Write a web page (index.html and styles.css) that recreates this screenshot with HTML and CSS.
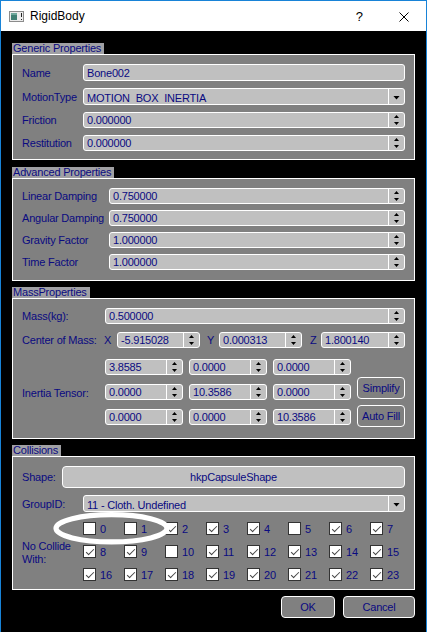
FILE: index.html
```html
<!DOCTYPE html>
<html lang="en">
<head>
    <meta charset="UTF-8">
    <meta name="viewport" content="width=device-width, initial-scale=1.0">
    <title>RigidBody</title>
    <link rel="stylesheet" href="styles.css">
</head>
<body>

    <div class="window">
        <!-- Title bar -->
        <div class="titlebar">
            <svg class="app-icon" viewBox="0 0 15 11">
                <rect x="0.5" y="0.5" width="14" height="10" fill="#ececec" stroke="#8c8c8c"/>
                <rect x="2" y="2" width="6" height="7" fill="#3f7f73"/>
                <rect x="2" y="2" width="6" height="2" fill="#6fa89c"/>
                <rect x="12" y="2" width="1" height="4" fill="#222"/>
                <rect x="12" y="8" width="1" height="1" fill="#222"/>
            </svg>
            <span class="title">RigidBody</span>
            <span class="help">?</span>
            <svg class="close" viewBox="0 0 10 10">
                <path d="M0.5 0.5 L9.5 9.5 M9.5 0.5 L0.5 9.5" stroke="#000" stroke-width="1"/>
            </svg>
        </div>

        <div class="content">
            <!-- Generic Properties -->
            <div class="group generic">
                <div class="group-title">Generic Properties</div>
                <div class="group-box">
                    <div class="form-row">
                        <span class="lbl">Name</span>
                        <div class="field">Bone002</div>
                    </div>
                    <div class="form-row">
                        <span class="lbl">MotionType</span>
                        <div class="field combo"><span class="val">MOTION_BOX_INERTIA</span><span class="drop"><i></i></span></div>
                    </div>
                    <div class="form-row">
                        <span class="lbl">Friction</span>
                        <div class="field spin"><span class="val">0.000000</span><span class="spin-btns"><i class="up"></i><i class="down"></i></span></div>
                    </div>
                    <div class="form-row">
                        <span class="lbl">Restitution</span>
                        <div class="field spin"><span class="val">0.000000</span><span class="spin-btns"><i class="up"></i><i class="down"></i></span></div>
                    </div>
                </div>
            </div>

            <!-- Advanced Properties -->
            <div class="group advanced">
                <div class="group-title">Advanced Properties</div>
                <div class="group-box">
                    <div class="form-row">
                        <span class="lbl">Linear Damping</span>
                        <div class="field spin"><span class="val">0.750000</span><span class="spin-btns"><i class="up"></i><i class="down"></i></span></div>
                    </div>
                    <div class="form-row">
                        <span class="lbl">Angular Damping</span>
                        <div class="field spin"><span class="val">0.750000</span><span class="spin-btns"><i class="up"></i><i class="down"></i></span></div>
                    </div>
                    <div class="form-row">
                        <span class="lbl">Gravity Factor</span>
                        <div class="field spin"><span class="val">1.000000</span><span class="spin-btns"><i class="up"></i><i class="down"></i></span></div>
                    </div>
                    <div class="form-row">
                        <span class="lbl">Time Factor</span>
                        <div class="field spin"><span class="val">1.000000</span><span class="spin-btns"><i class="up"></i><i class="down"></i></span></div>
                    </div>
                </div>
            </div>

            <!-- Mass Properties -->
            <div class="group mass">
                <div class="group-title">MassProperties</div>
                <div class="group-box">
                    <div class="form-row">
                        <span class="lbl">Mass(kg):</span>
                        <div class="field spin"><span class="val">0.500000</span><span class="spin-btns"><i class="up"></i><i class="down"></i></span></div>
                    </div>
                    <div class="form-row com">
                        <span class="lbl">Center of Mass:</span>
                        <span class="axis">X</span>
                        <div class="field spin"><span class="val">-5.915028</span><span class="spin-btns"><i class="up"></i><i class="down"></i></span></div>
                        <span class="axis y">Y</span>
                        <div class="field spin"><span class="val">0.000313</span><span class="spin-btns"><i class="up"></i><i class="down"></i></span></div>
                        <span class="axis z">Z</span>
                        <div class="field spin"><span class="val">1.800140</span><span class="spin-btns"><i class="up"></i><i class="down"></i></span></div>
                    </div>
                    <div class="inertia">
                        <span class="lbl">Inertia Tensor:</span>
                        <div class="tensor">
                            <div class="field spin"><span class="val">3.8585</span><span class="spin-btns"><i class="up"></i><i class="down"></i></span></div>
                            <div class="field spin"><span class="val">0.0000</span><span class="spin-btns"><i class="up"></i><i class="down"></i></span></div>
                            <div class="field spin"><span class="val">0.0000</span><span class="spin-btns"><i class="up"></i><i class="down"></i></span></div>
                            <div class="field spin"><span class="val">0.0000</span><span class="spin-btns"><i class="up"></i><i class="down"></i></span></div>
                            <div class="field spin"><span class="val">10.3586</span><span class="spin-btns"><i class="up"></i><i class="down"></i></span></div>
                            <div class="field spin"><span class="val">0.0000</span><span class="spin-btns"><i class="up"></i><i class="down"></i></span></div>
                            <div class="field spin"><span class="val">0.0000</span><span class="spin-btns"><i class="up"></i><i class="down"></i></span></div>
                            <div class="field spin"><span class="val">0.0000</span><span class="spin-btns"><i class="up"></i><i class="down"></i></span></div>
                            <div class="field spin"><span class="val">10.3586</span><span class="spin-btns"><i class="up"></i><i class="down"></i></span></div>
                        </div>
                        <div class="tensor-btns">
                            <div class="btn">Simplify</div>
                            <div class="btn">Auto Fill</div>
                        </div>
                    </div>
                </div>
            </div>

            <!-- Collisions -->
            <div class="group collisions">
                <div class="group-title">Collisions</div>
                <div class="group-box">
                    <div class="form-row shape-row">
                        <span class="lbl">Shape:</span>
                        <div class="shape-btn">hkpCapsuleShape</div>
                    </div>
                    <div class="form-row">
                        <span class="lbl">GroupID:</span>
                        <div class="field combo"><span class="val">11 - Cloth, Undefined</span><span class="drop"><i></i></span></div>
                    </div>
                    <div class="collide">
                        <span class="lbl">No Collide<br>With:</span>
                        <div class="checks">
                            <div class="check"><span class="box"></span><span>0</span></div>
                            <div class="check"><span class="box"></span><span>1</span></div>
                            <div class="check"><span class="box on"></span><span>2</span></div>
                            <div class="check"><span class="box on"></span><span>3</span></div>
                            <div class="check"><span class="box on"></span><span>4</span></div>
                            <div class="check"><span class="box"></span><span>5</span></div>
                            <div class="check"><span class="box on"></span><span>6</span></div>
                            <div class="check"><span class="box on"></span><span>7</span></div>
                            <div class="check"><span class="box on"></span><span>8</span></div>
                            <div class="check"><span class="box on"></span><span>9</span></div>
                            <div class="check"><span class="box"></span><span>10</span></div>
                            <div class="check"><span class="box on"></span><span>11</span></div>
                            <div class="check"><span class="box on"></span><span>12</span></div>
                            <div class="check"><span class="box on"></span><span>13</span></div>
                            <div class="check"><span class="box on"></span><span>14</span></div>
                            <div class="check"><span class="box on"></span><span>15</span></div>
                            <div class="check"><span class="box on"></span><span>16</span></div>
                            <div class="check"><span class="box on"></span><span>17</span></div>
                            <div class="check"><span class="box on"></span><span>18</span></div>
                            <div class="check"><span class="box on"></span><span>19</span></div>
                            <div class="check"><span class="box on"></span><span>20</span></div>
                            <div class="check"><span class="box on"></span><span>21</span></div>
                            <div class="check"><span class="box on"></span><span>22</span></div>
                            <div class="check"><span class="box on"></span><span>23</span></div>
                        </div>
                    </div>
                </div>
            </div>

            <!-- Dialog buttons -->
            <div class="dialog-btns">
                <div class="btn ok">OK</div>
                <div class="btn cancel">Cancel</div>
            </div>
        </div>

        <!-- hand-drawn highlight over boxes 0 and 1 -->
        <svg class="highlight" width="122" height="38" viewBox="0 0 122 38">
            <ellipse cx="59.5" cy="17.3" rx="55.5" ry="13.6" fill="none" stroke="#fff" stroke-width="5.2"/>
        </svg>
    </div>

</body>
</html>
```

FILE: styles.css
```css
* {
    margin: 0;
    padding: 0;
    box-sizing: border-box;
}

body {
    background: #000;
    font-family: "Liberation Sans", Arial, sans-serif;
    font-size: 11px;
    letter-spacing: -0.2px;
    color: #0a0a80;
}

.window {
    position: relative;
    width: 427px;
    height: 632px;
    border: 1px solid #1883d7;
    border-bottom: none;
    background: #000;
}

/* Title bar */
.titlebar {
    height: 30px;
    background: #fff;
    color: #000;
    display: flex;
    align-items: center;
    padding-left: 8px;
    letter-spacing: 0;
}

.app-icon {
    width: 15px;
    height: 11px;
    margin-top: 1px;
}

.title {
    margin-left: 6px;
    font-size: 12px;
}

.help {
    margin-left: auto;
    font-size: 13px;
}

.close {
    width: 10px;
    height: 10px;
    margin-left: 36px;
    margin-right: 17px;
    margin-top: 1px;
}

/* Content */
.content {
    padding: 12px 11px 0;
}

.group {
    display: flex;
    flex-direction: column;
    align-items: flex-start;
    margin-bottom: 6px;
}

.group.generic {
    margin-bottom: 7px;
}

.group-title {
    height: 11px;
    line-height: 11px;
    padding: 0 3px 0 1px;
    background: #a0a0a4;
}

.group-box {
    align-self: stretch;
    background: #808080;
    border: 1px solid #fff;
    padding: 9px 9px 8px;
    display: flex;
    flex-direction: column;
    gap: 7px;
}

.form-row {
    display: flex;
    align-items: center;
}

.lbl {
    flex: none;
    width: 61px;
    white-space: nowrap;
}

/* Fields */
.field {
    flex: 1;
    height: 17px;
    background: #c0c0c0;
    border: 1px solid #fff;
    border-radius: 3px;
    display: flex;
    align-items: center;
    padding-left: 3px;
    white-space: nowrap;
    overflow: hidden;
}

.field.spin {
    height: 16px;
}

.val {
    flex: 1;
}

.spin-btns,
.drop {
    flex: none;
    width: 16px;
    align-self: stretch;
    border-left: 1px solid #fff;
    display: flex;
    align-items: center;
}

.spin-btns {
    flex-direction: column;
    justify-content: space-between;
    padding: 2px 0 2px;
}

.spin-btns i {
    display: block;
    width: 5px;
    height: 3px;
    background: #000;
}

.spin-btns .up {
    clip-path: polygon(50% 0, 100% 100%, 0 100%);
}

.spin-btns .down {
    clip-path: polygon(0 0, 100% 0, 50% 100%);
}

/* text sits low in the combo and its underscores are cut off */
.combo .val {
    align-self: flex-start;
    height: 13px;
    padding-top: 2px;
    line-height: 14px;
    overflow: hidden;
}

.drop {
    justify-content: center;
}

.drop i {
    display: block;
    width: 7px;
    height: 4px;
    margin-top: 2px;
    background: #000;
    clip-path: polygon(0 0, 100% 0, 50% 100%);
}

/* Advanced */
.advanced .group-box {
    gap: 6px;
    padding-bottom: 10px;
}

.advanced .lbl {
    width: 87px;
}

/* Mass */
.mass .group-box {
    gap: 0;
    padding-bottom: 11px;
}

.mass .lbl {
    width: 83px;
}

.com {
    margin-top: 8px;
}

.com .lbl {
    width: 82px;
}

.axis {
    flex: none;
    width: 13px;
}

.axis.y {
    width: 19px;
    padding-left: 7px;
}

.axis.z {
    width: 19px;
    padding-left: 8px;
}

.com .field {
    flex: none;
    width: 83px;
}

.com .field:last-child {
    flex: 1;
}

.inertia {
    display: flex;
    align-items: center;
    margin-top: 11px;
}

.tensor {
    align-self: flex-start;
    display: grid;
    grid-template-columns: repeat(3, 78px);
    column-gap: 6px;
    row-gap: 9px;
    padding-bottom: 2px;
}

.tensor-btns {
    align-self: stretch;
    width: 48px;
    margin-left: 6px;
    display: flex;
    flex-direction: column;
    justify-content: flex-end;
    gap: 6px;
}

.btn {
    height: 22px;
    background: #808080;
    border: 1px solid #fff;
    border-radius: 4px;
    display: flex;
    align-items: center;
    justify-content: center;
}

/* Collisions */
.shape-row .lbl {
    width: 40px;
}

.shape-btn {
    flex: 1;
    height: 22px;
    background: #c0c0c0;
    border: 1px solid #fff;
    border-radius: 4px;
    display: flex;
    align-items: center;
    justify-content: center;
}

.collide {
    display: flex;
    align-items: center;
    margin-top: 3px;
}

.collide .lbl {
    line-height: 13px;
    padding-top: 2px;
}

.checks {
    display: grid;
    grid-template-columns: repeat(8, 41px);
    row-gap: 10px;
}

.check {
    display: flex;
    align-items: center;
    height: 13px;
}

.box {
    width: 13px;
    height: 13px;
    background: #fff;
    border: 1px solid #333;
    display: flex;
    align-items: center;
    justify-content: center;
}

.box.on::after {
    content: "";
    width: 7px;
    height: 3px;
    border-left: 1.5px solid #444;
    border-bottom: 1.5px solid #444;
    transform: translate(0, -1px) rotate(-45deg);
}

.check span + span {
    margin-left: 4px;
}

/* Dialog buttons */
.dialog-btns {
    display: flex;
    justify-content: flex-end;
    gap: 8px;
}

.dialog-btns .ok {
    width: 54px;
}

.dialog-btns .cancel {
    width: 72px;
}

.highlight {
    position: absolute;
    left: 51px;
    top: 510px;
}
```
